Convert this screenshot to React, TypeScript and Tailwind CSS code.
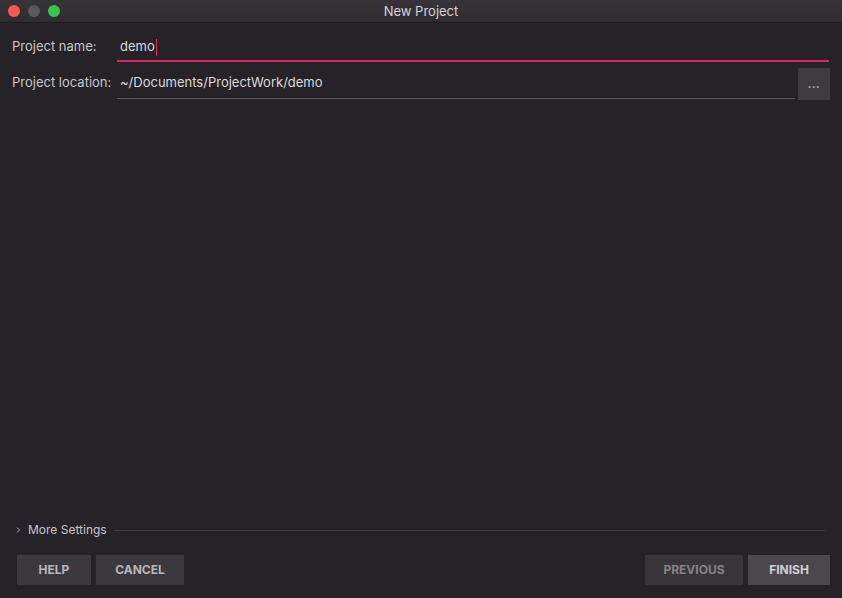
import React from "react";

export default function App() {
  return (
    <div
      className="w-[842px] h-[598px] bg-[#252327] flex flex-col overflow-hidden text-[#cfcdd0]"
      style={{ fontFamily: "Inter, 'Liberation Sans', Arial, sans-serif" }}
    >
      {/* Title bar */}
      <div className="h-[23px] bg-gradient-to-b from-[#363438] to-[#2e2c30] border-b border-[#1c1b1d] flex items-center relative shrink-0">
        <div className="flex items-center gap-[8px] pl-[8px]">
          <span className="w-[12px] h-[12px] rounded-full bg-[#fc5753]" />
          <span className="w-[12px] h-[12px] rounded-full bg-[#5b595c]" />
          <span className="w-[12px] h-[12px] rounded-full bg-[#33c748]" />
        </div>
        <div className="absolute inset-0 flex items-center justify-center pt-[1px] text-[13px] text-[#d6d4d7] pointer-events-none">
          New Project
        </div>
      </div>

      {/* Form */}
      <div className="flex flex-col pl-[12px] pr-[12px] pt-[13px]">
        <div className="flex items-end h-[26px]">
          <div className="w-[105px] text-[13px] text-[#c8c6c9] pb-[6px]">Project name:</div>
          <div className="flex-1 h-[26px] border-b-2 border-[#d9285f] flex items-center pl-[3px] pb-[2px] text-[13px] text-[#dcdadd] mr-[1px]">
            demo<span className="inline-block w-[1.5px] h-[17px] bg-[#d9285f] ml-[1px]" />
          </div>
        </div>
        <div className="flex items-end mt-[5px] h-[32px]">
          <div className="w-[105px] text-[13px] text-[#c8c6c9] pb-[7px]">Project location:</div>
          <div className="flex-1 h-[32px] border-b border-[#555357] flex items-center pl-[3px] text-[13px] text-[#dcdadd]">
            ~/Documents/ProjectWork/demo
          </div>
          <button className="w-[32px] h-[32px] ml-[3px] mb-[-1px] bg-[#3d3b3f] flex items-center justify-center text-[#bdbbbe] text-[11px] font-bold tracking-[0.5px]">
            ...
          </button>
        </div>
      </div>

      <div className="flex-1" />

      {/* More settings */}
      <div className="flex items-center pl-[14px] pr-[17px] h-[16px]">
        <svg width="8" height="8" viewBox="0 0 8 8" className="mr-[6px]">
          <path d="M3 1.5 L5.5 4 L3 6.5" stroke="#a9a7aa" strokeWidth="1" fill="none" />
        </svg>
        <span className="text-[12px] text-[#c8c6c9]">More Settings</span>
        <div className="flex-1 h-px bg-[#3c3a3e] ml-[7px]" />
      </div>

      {/* Buttons */}
      <div className="flex items-center justify-between pl-[17px] pr-[12px] pt-[17px] pb-[13px]">
        <div className="flex gap-[5px]">
          <button className="w-[74px] h-[30px] bg-[#3b393d] text-[12px] font-bold text-[#b8b6b9]">HELP</button>
          <button className="w-[88px] h-[30px] bg-[#3b393d] text-[12px] font-bold text-[#b8b6b9]">CANCEL</button>
        </div>
        <div className="flex gap-[5px]">
          <button className="w-[98px] h-[30px] bg-[#38363a] text-[12px] font-bold text-[#858386]">PREVIOUS</button>
          <button className="w-[82px] h-[30px] bg-[#4a484c] text-[12px] font-bold text-[#d2d0d3]">FINISH</button>
        </div>
      </div>
    </div>
  );
}
